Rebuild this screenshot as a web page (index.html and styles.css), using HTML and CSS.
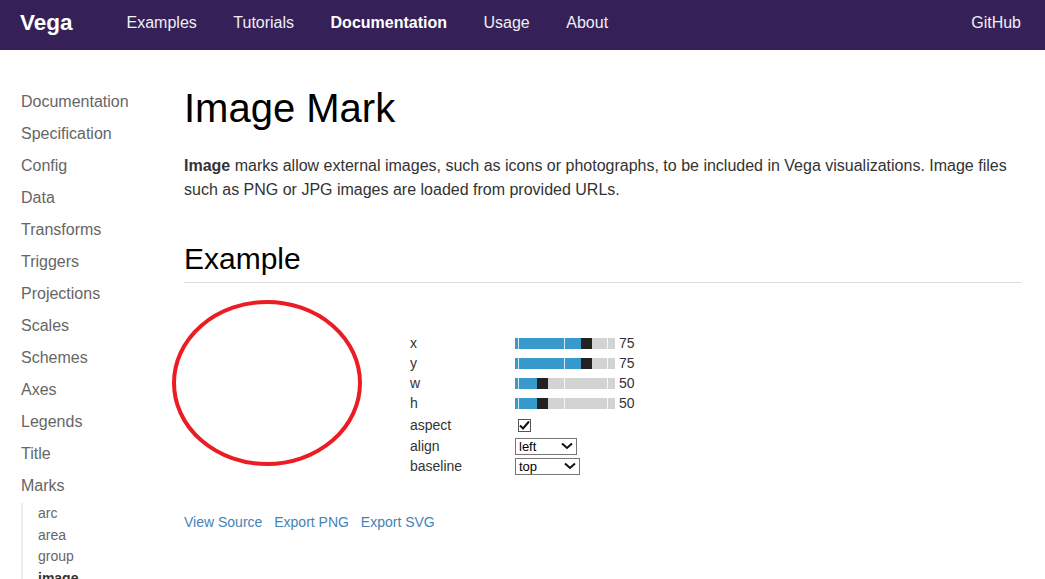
FILE: index.html
```html
<!DOCTYPE html>
<html lang="en">

<head>
    <meta charset="UTF-8">
    <meta name="viewport" content="width=device-width, initial-scale=1.0">
    <title>Image Mark | Vega</title>
    <link rel="stylesheet" href="styles.css">
</head>

<body>
    <nav class="navbar">
        <a class="brand" href="#">Vega</a>
        <a class="nav-link" href="#">Examples</a>
        <a class="nav-link" href="#">Tutorials</a>
        <a class="nav-link active" href="#">Documentation</a>
        <a class="nav-link" href="#">Usage</a>
        <a class="nav-link" href="#">About</a>
        <a class="nav-link github" href="#">GitHub</a>
    </nav>

    <div class="page">
        <aside class="sidebar">
            <a href="#">Documentation</a>
            <a href="#">Specification</a>
            <a href="#">Config</a>
            <a href="#">Data</a>
            <a href="#">Transforms</a>
            <a href="#">Triggers</a>
            <a href="#">Projections</a>
            <a href="#">Scales</a>
            <a href="#">Schemes</a>
            <a href="#">Axes</a>
            <a href="#">Legends</a>
            <a href="#">Title</a>
            <a href="#">Marks</a>
            <div class="submenu">
                <a href="#">arc</a>
                <a href="#">area</a>
                <a href="#">group</a>
                <a href="#" class="current">image</a>
            </div>
        </aside>

        <main class="content">
            <h1>Image Mark</h1>
            <p><strong>Image</strong> marks allow external images, such as icons or photographs, to be included in Vega visualizations. Image files such as PNG or JPG images are loaded from provided URLs.</p>

            <h2>Example</h2>

            <div class="example">
                <svg class="chart" width="210" height="180" viewBox="0 0 210 180">
                    <ellipse cx="83" cy="86" rx="93" ry="81" fill="none" stroke="#ec1c24" stroke-width="4"/>
                </svg>

                <div class="bindings">
                    <div class="bind-row">
                        <span class="bind-label">x</span>
                        <div class="track">
                            <div class="fill" style="width: 66px"></div>
                            <div class="thumb"></div>
                            <span class="tick t1"></span><span class="tick t2"></span><span class="tick t3"></span>
                        </div>
                        <span class="bind-value">75</span>
                    </div>
                    <div class="bind-row">
                        <span class="bind-label">y</span>
                        <div class="track">
                            <div class="fill" style="width: 66px"></div>
                            <div class="thumb"></div>
                            <span class="tick t1"></span><span class="tick t2"></span><span class="tick t3"></span>
                        </div>
                        <span class="bind-value">75</span>
                    </div>
                    <div class="bind-row">
                        <span class="bind-label">w</span>
                        <div class="track">
                            <div class="fill" style="width: 22px"></div>
                            <div class="thumb"></div>
                            <span class="tick t1"></span><span class="tick t2"></span><span class="tick t3"></span>
                        </div>
                        <span class="bind-value">50</span>
                    </div>
                    <div class="bind-row">
                        <span class="bind-label">h</span>
                        <div class="track">
                            <div class="fill" style="width: 22px"></div>
                            <div class="thumb"></div>
                            <span class="tick t1"></span><span class="tick t2"></span><span class="tick t3"></span>
                        </div>
                        <span class="bind-value">50</span>
                    </div>
                    <div class="bind-row tall">
                        <span class="bind-label">aspect</span>
                        <span class="checkbox">
                            <svg width="11" height="11" viewBox="0 0 11 11"><path d="M1 5.5 L4 8.5 L10 1.5" fill="none" stroke="#111" stroke-width="2"/></svg>
                        </span>
                    </div>
                    <div class="bind-row">
                        <span class="bind-label">align</span>
                        <span class="select sel-left">left
                            <svg width="12" height="8" viewBox="0 0 12 8"><path d="M1 1.5 L6 6 L11 1.5" fill="none" stroke="#111" stroke-width="2"/></svg>
                        </span>
                    </div>
                    <div class="bind-row">
                        <span class="bind-label">baseline</span>
                        <span class="select sel-top">top
                            <svg width="12" height="8" viewBox="0 0 12 8"><path d="M1 1.5 L6 6 L11 1.5" fill="none" stroke="#111" stroke-width="2"/></svg>
                        </span>
                    </div>
                </div>
            </div>

            <div class="actions">
                <a href="#">View Source</a>
                <a href="#">Export PNG</a>
                <a href="#">Export SVG</a>
            </div>
        </main>
    </div>
</body>

</html>
```

FILE: styles.css
```css
body {
    font-family: "Liberation Sans", Arial, sans-serif;
    background-color: #fff;
    color: #333;
    margin: 0;
    padding: 0;
    overflow: hidden;
}

a {
    text-decoration: none;
}

/* top bar */
.navbar {
    display: flex;
    align-items: center;
    height: 50px;
    background-color: #352157;
    padding: 0 24px 0 20px;
}

.brand {
    color: #fff;
    font-weight: bold;
    font-size: 22.5px;
    margin-right: 54px;
    margin-top: -5px;
}

.nav-link {
    color: #f0eef6;
    font-size: 16px;
    margin-right: 36.5px;
    margin-top: -4px;
}

.nav-link.active {
    color: #fff;
    font-weight: bold;
}

.nav-link.github {
    margin-left: auto;
    margin-right: 0;
}

/* layout */
.page {
    display: flex;
}

.sidebar {
    width: 184px;
    flex-shrink: 0;
    padding: 36px 0 0 21px;
    box-sizing: border-box;
    display: flex;
    flex-direction: column;
}

.sidebar a {
    color: #666;
    font-size: 16px;
    line-height: 32px;
}

.submenu {
    display: flex;
    flex-direction: column;
    border-left: 2px solid #eee;
    margin-top: 1px;
    padding-left: 15px;
}

.submenu a {
    font-size: 14px;
    line-height: 21.5px;
}

.submenu a.current {
    font-weight: bold;
    color: #333;
}

.content {
    flex: 1;
    padding-right: 24px;
}

.content h1 {
    font-size: 40px;
    font-weight: normal;
    color: #000;
    margin: 34px 0 0;
    line-height: 48px;
}

.content p {
    font-size: 16px;
    line-height: 24px;
    margin: 22px 0 0;
}

.content h2 {
    font-size: 30px;
    font-weight: normal;
    color: #000;
    margin: 39px 0 0;
    line-height: 36px;
    padding-bottom: 5px;
    border-bottom: 1px solid #ddd;
}

/* example view */
.example {
    display: flex;
    margin-top: 14px;
}

.chart {
    display: block;
    flex-shrink: 0;
    overflow: visible;
}

.bindings {
    margin: 36px 0 0 16px;
    font-size: 14px;
    color: #333;
}

.bind-row {
    display: flex;
    align-items: center;
    height: 20px;
}

.bind-row.tall {
    height: 22px;
    margin-top: 1px;
}

.bind-label {
    width: 105px;
}

.track {
    position: relative;
    display: flex;
    width: 100px;
    height: 11px;
    background-color: #d3d3d3;
}

.fill {
    background-color: #3799cc;
    height: 100%;
}

.thumb {
    width: 11px;
    height: 100%;
    background-color: #222;
}

.tick {
    position: absolute;
    top: 0;
    width: 1px;
    height: 100%;
    background-color: #fff;
    opacity: 0.8;
}

.t1 { left: 3px; }
.t2 { left: 49px; }
.t3 { left: 92px; }

.bind-value {
    margin-left: 4px;
}

.checkbox {
    display: flex;
    align-items: center;
    justify-content: center;
    width: 11px;
    height: 11px;
    border: 1px solid #555;
    margin-left: 3px;
}

.select {
    display: flex;
    align-items: center;
    justify-content: space-between;
    box-sizing: border-box;
    height: 17px;
    border: 1px solid #767676;
    padding: 0 3px 0 3px;
    font-size: 13px;
    color: #000;
}

.sel-left { width: 62px; }
.sel-top { width: 65px; }

.actions {
    margin-top: 37px;
    font-size: 14px;
}

.actions a {
    color: #4682b4;
    margin-right: 8px;
}
```
